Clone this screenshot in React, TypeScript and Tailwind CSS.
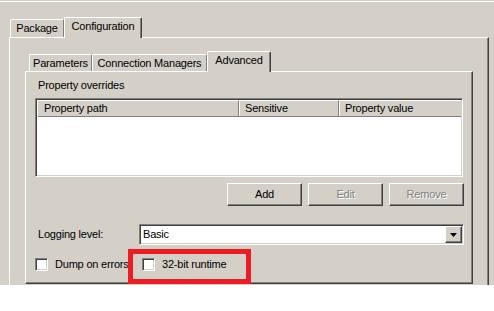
import React from "react";

// classic win32 bevels
const raised =
  "border border-t-white border-l-white border-r-[#404040] border-b-[#404040] shadow-[inset_-1px_-1px_#808080]";
const sunken =
  "border border-t-[#808080] border-l-[#808080] border-r-white border-b-white shadow-[inset_1px_1px_#404040,inset_-1px_-1px_#d4d0c8]";

function Tab({ label, width, selected }: { label: string; width: string; selected?: boolean }) {
  if (selected) {
    return (
      <div
        className={`relative z-10 -mb-px h-[21px] ${width} flex justify-center pt-[2px] bg-[#d4d0c8] border-t border-l border-r border-t-white border-l-white border-r-[#404040] shadow-[inset_-1px_0_#808080] rounded-tl-[2px] rounded-tr-[2px]`}
      >
        <span className="leading-[13px]">{label}</span>
      </div>
    );
  }
  return (
    <div
      className={`h-[17px] ${width} flex items-center justify-center bg-[#d4d0c8] border-t border-l border-r border-t-white border-l-white border-r-[#808080] rounded-tl-[2px] rounded-tr-[2px]`}
    >
      <span className="leading-[13px]">{label}</span>
    </div>
  );
}

function PushButton({ label, disabled }: { label: string; disabled?: boolean }) {
  return (
    <button
      type="button"
      className={`w-[75px] h-[23px] bg-[#d4d0c8] ${raised} flex items-center justify-center leading-[13px] ${
        disabled ? "text-[#808080] [text-shadow:1px_1px_#ffffff]" : "text-black"
      }`}
    >
      {label}
    </button>
  );
}

function CheckBox({ label }: { label: string }) {
  return (
    <div className="flex items-center gap-[7px]">
      <div className={`w-[13px] h-[13px] bg-white ${sunken}`} />
      <span className="leading-[13px]">{label}</span>
    </div>
  );
}

export default function App() {
  return (
    <div className="relative w-[494px] h-[311px] bg-white text-[11px] tracking-[-0.2px] text-black font-['Liberation_Sans',Arial,sans-serif]">
      <div className="h-[285px] bg-[#d4d0c8] overflow-hidden flex flex-col">
        <div className="h-px" />
        <div className="h-px bg-white" />

        {/* outer tab strip */}
        <div className="h-[35px] pl-[10px] flex items-end">
          <div className="h-[18px] w-[54px] flex items-center justify-center border-t border-l border-r border-t-white border-l-white border-r-[#808080] rounded-tl-[2px]">
            <span className="leading-[13px]">Package</span>
          </div>
          <Tab label="Configuration" width="w-[78px]" selected />
        </div>

        {/* Configuration page */}
        <div className="flex-1 ml-[9px] w-[480px] border-t border-l border-r border-t-white border-l-white border-r-[#404040] shadow-[inset_-1px_0_#808080]">
          <div className="ml-[15px] w-[448px]">
            <div className="h-[33px] pl-[4px] flex items-end">
              <Tab label="Parameters" width="w-[63px]" />
              <Tab label="Connection Managers" width="w-[115px]" />
              <Tab label="Advanced" width="w-[64px]" selected />
            </div>

            {/* Advanced page */}
            <div className="h-[213px] border border-t-white border-l-white border-r-[#404040] border-b-[#404040] shadow-[inset_-1px_-1px_#808080]">
              <div className="mt-[7px] pl-[12px] leading-[13px]">Property overrides</div>

              <div className={`mt-[6px] ml-[9px] w-[428px] h-[79px] bg-white ${sunken} p-px`}>
                <div className="flex h-[17px] bg-[#d4d0c8] border-b border-b-[#808080] ml-px">
                  <div className="w-[201px] pl-[6px] flex items-center border-r border-r-[#808080] border-t border-t-white">
                    <span className="leading-[13px]">Property path</span>
                  </div>
                  <div className="w-[100px] pl-[5px] flex items-center border-l border-l-white border-r border-r-[#808080] border-t border-t-white">
                    <span className="leading-[13px]">Sensitive</span>
                  </div>
                  <div className="flex-1 pl-[5px] flex items-center border-l border-l-white border-t border-t-white">
                    <span className="leading-[13px]">Property value</span>
                  </div>
                </div>
              </div>

              <div className="mt-[6px] ml-[9px] w-[429px] flex justify-end gap-[6px]">
                <PushButton label="Add" />
                <PushButton label="Edit" disabled />
                <PushButton label="Remove" disabled />
              </div>

              <div className="mt-[18px] ml-[12px] flex items-center">
                <div className="w-[101px] leading-[13px]">Logging level:</div>
                <div className={`w-[325px] h-[21px] bg-white ${sunken} p-px flex items-center`}>
                  <span className="flex-1 pl-[2px] leading-[13px]">Basic</span>
                  <div className={`w-[17px] h-[17px] bg-[#d4d0c8] ${raised} flex items-center justify-center`}>
                    <svg width="7" height="4" viewBox="0 0 7 4">
                      <polygon points="0,0 7,0 3.5,4" fill="#000" />
                    </svg>
                  </div>
                </div>
              </div>

              <div className="mt-[13px] ml-[9px] flex items-center">
                <div className="w-[107px]">
                  <CheckBox label="Dump on errors" />
                </div>
                <CheckBox label="32-bit runtime" />
              </div>
            </div>
          </div>
        </div>
      </div>

      {/* highlight annotation */}
      <div className="absolute left-[128px] top-[249px] w-[123px] h-[35px] border-[5px] border-[#ed1c24]" />
    </div>
  );
}
